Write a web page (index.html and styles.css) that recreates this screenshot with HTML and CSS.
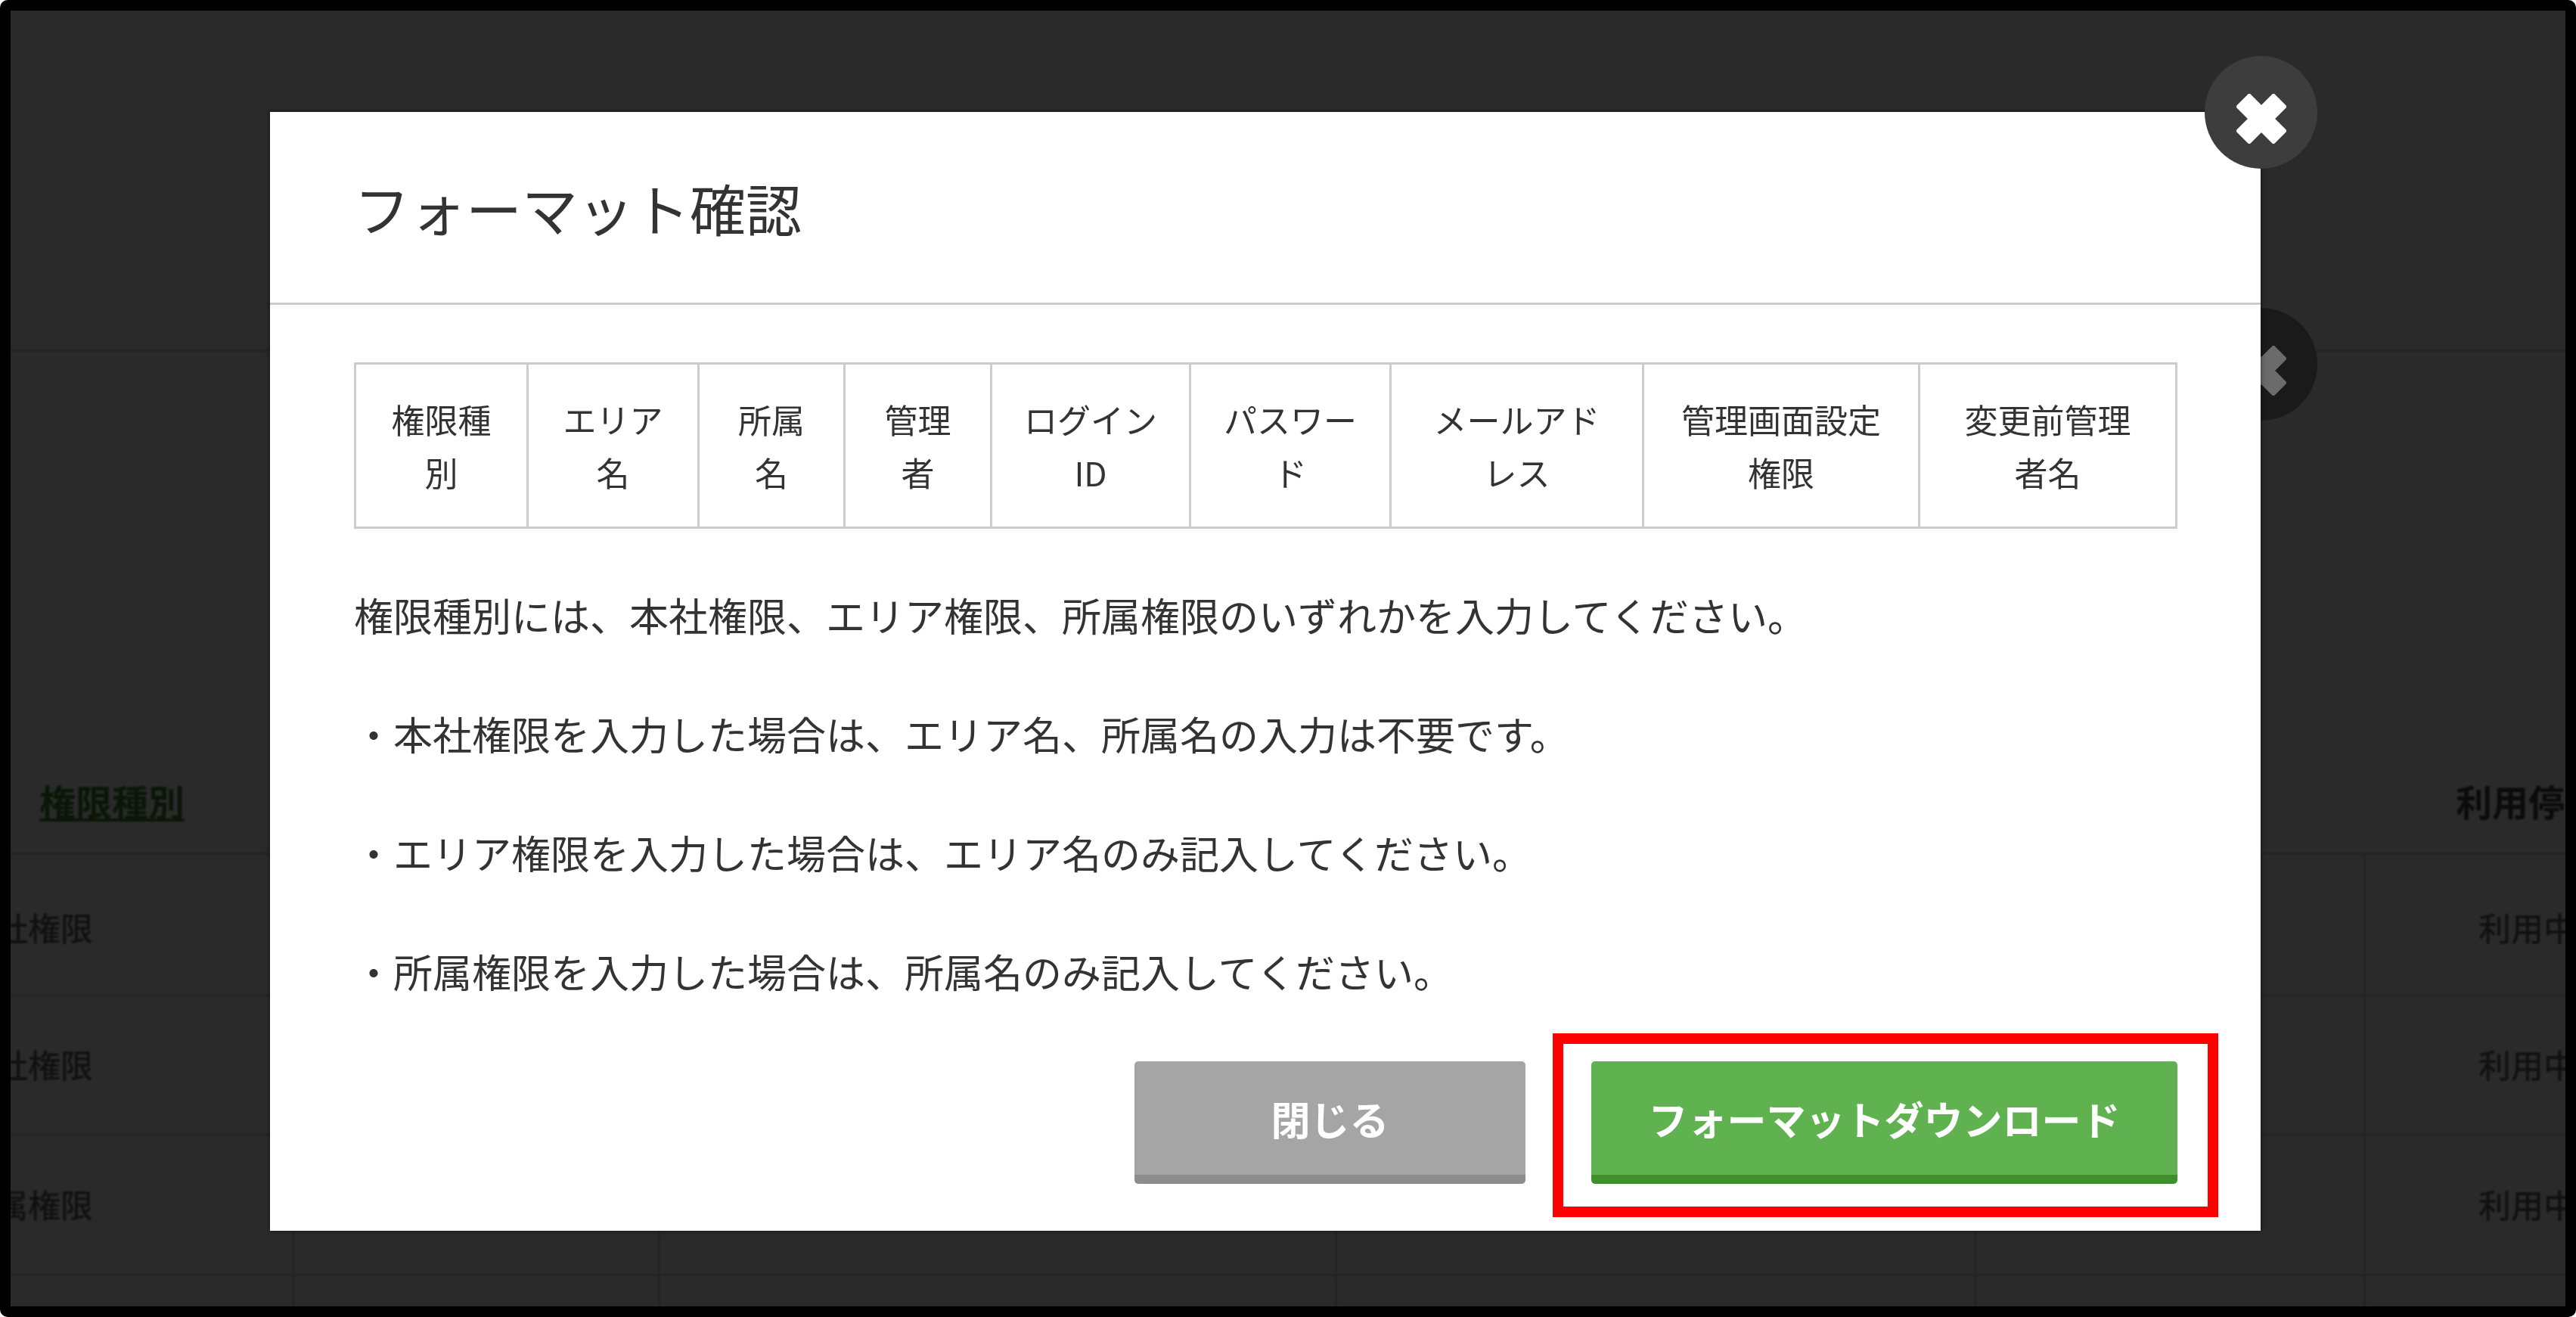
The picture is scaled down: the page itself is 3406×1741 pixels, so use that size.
FILE: index.html
```html
<!DOCTYPE html>
<html lang="ja">
<head>
    <meta charset="UTF-8">
    <title>フォーマット確認</title>
    <link rel="stylesheet" href="styles.css">
</head>
<body>
    <div class="frame">
        <!-- page behind the overlay -->
        <div class="page">
            <div class="page-head"></div>
            <div class="list">
                <div class="list-row list-header">
                    <div class="cell cell-type"><a href="#">権限種別</a></div>
                    <div class="cell"></div>
                    <div class="cell"></div>
                    <div class="cell"></div>
                    <div class="cell"></div>
                    <div class="cell cell-status">利用停止</div>
                </div>
                <div class="list-row list-row-first">
                    <div class="cell cell-type">本社権限</div>
                    <div class="cell"></div>
                    <div class="cell"></div>
                    <div class="cell"></div>
                    <div class="cell"></div>
                    <div class="cell cell-status">利用中</div>
                </div>
                <div class="list-row">
                    <div class="cell cell-type">本社権限</div>
                    <div class="cell"></div>
                    <div class="cell"></div>
                    <div class="cell"></div>
                    <div class="cell"></div>
                    <div class="cell cell-status">利用中</div>
                </div>
                <div class="list-row">
                    <div class="cell cell-type">所属権限</div>
                    <div class="cell"></div>
                    <div class="cell"></div>
                    <div class="cell"></div>
                    <div class="cell"></div>
                    <div class="cell cell-status">利用中</div>
                </div>
                <div class="list-row">
                    <div class="cell cell-type"></div>
                    <div class="cell"></div>
                    <div class="cell"></div>
                    <div class="cell"></div>
                    <div class="cell"></div>
                    <div class="cell cell-status"></div>
                </div>
            </div>
        </div>

        <div class="overlay"></div>

        <!-- close button of the dialog underneath -->
        <div class="close-btn close-under">
            <svg class="close-icon" viewBox="0 0 66 66"><path d="M17 3 L33 19 L49 3 L63 17 L47 33 L63 49 L49 63 L33 47 L17 63 L3 49 L19 33 L3 17 Z"/></svg>
        </div>

        <div class="modal">
            <div class="close-btn close-top">
                <svg class="close-icon" viewBox="0 0 66 66"><path d="M17 3 L33 19 L49 3 L63 17 L47 33 L63 49 L49 63 L33 47 L17 63 L3 49 L19 33 L3 17 Z"/></svg>
            </div>
            <div class="modal-head">
                <h2 class="modal-title">フォーマット確認</h2>
            </div>
            <div class="modal-body">
                <table class="format-table">
                    <colgroup>
                        <col class="c1"><col class="c2"><col class="c3"><col class="c4"><col class="c5"><col class="c6"><col class="c7"><col class="c8"><col class="c9">
                    </colgroup>
                    <tr>
                        <td>権限種<br>別</td>
                        <td>エリア<br>名</td>
                        <td>所属<br>名</td>
                        <td>管理<br>者</td>
                        <td>ログイン<br>ID</td>
                        <td>パスワー<br>ド</td>
                        <td>メールアド<br>レス</td>
                        <td>管理画面設定<br>権限</td>
                        <td>変更前管理<br>者名</td>
                    </tr>
                </table>
                <p class="note note-first">権限種別には、本社権限、エリア権限、所属権限のいずれかを入力してください。</p>
                <p class="note">・本社権限を入力した場合は、エリア名、所属名の入力は不要です。</p>
                <p class="note">・エリア権限を入力した場合は、エリア名のみ記入してください。</p>
                <p class="note">・所属権限を入力した場合は、所属名のみ記入してください。</p>
            </div>
            <div class="modal-foot">
                <a class="btn btn-gray" href="#">閉じる</a>
                <div class="btn-wrap">
                    <a class="btn btn-green" href="#">フォーマットダウンロード</a>
                    <div class="highlight"></div>
                </div>
            </div>
        </div>
    </div>
</body>
</html>
```

FILE: styles.css
```css
html, body {
    margin: 0;
    padding: 0;
    background-color: #fff;
}
body {
    font-family: "Noto Sans CJK JP", "Liberation Sans", sans-serif;
    color: #333;
}
.frame {
    position: relative;
    box-sizing: border-box;
    width: 3406px;
    height: 1741px;
    border: 14px solid #000;
    border-radius: 10px;
    overflow: hidden;
    background-color: #fff;
}

/* page behind */
.page {
    height: 100%;
    color: #666;
    font-size: 43px;
    font-weight: 500;
    filter: blur(1px);
}
.page-head {
    height: 451px;
    border-bottom: 3px solid #d4d4d4;
    box-sizing: border-box;
}
.list {
    display: grid;
    grid-template-rows: 665px 187px 184px 186px 60px;
}
.list-row {
    display: grid;
    grid-template-columns: 375px 484px 895px 845px 515px 264px;
    border-bottom: 3px solid #d4d4d4;
    box-sizing: border-box;
}
.cell {
    display: flex;
    align-items: center;
    box-sizing: border-box;
    padding-bottom: 4px;
    border-right: 3px solid #d4d4d4;
    white-space: nowrap;
}
.list-row-first .cell {
    padding-top: 6px;
    padding-bottom: 0;
}
.list-header .cell {
    border-right: none;
    align-items: flex-end;
    padding-bottom: 34px;
    font-size: 48px;
    font-weight: 700;
}
.cell-type a {
    margin-left: 38px;
    color: #3c8a2e;
}
.list-row .cell-type {
    text-indent: -63px;
}
.list-header .cell-type {
    text-indent: 0;
}
.cell-status {
    border-right: none;
    padding-left: 149px;
}
.list-header .cell-status {
    color: #444;
    padding-left: 119px;
}
.overlay {
    position: absolute;
    inset: 0;
    background-color: rgba(0,0,0,.835);
}

/* dialog */
.modal {
    position: absolute;
    left: 343px;
    top: 134px;
    box-sizing: border-box;
    width: 2632px;
    height: 1479px;
    background-color: #fff;
    box-shadow: 0 0 6px rgba(0,0,0,.6);
}
.close-btn {
    position: absolute;
    display: flex;
    align-items: center;
    justify-content: center;
    width: 149px;
    height: 149px;
    padding-top: 17px;
    box-sizing: border-box;
    border-radius: 50%;
}
.close-top {
    top: -74px;
    right: -75px;
    background-color: #3d3d3d;
}
.close-under {
    left: 2901px;
    top: 393px;
    background-color: #1a1a1a;
}
.close-icon {
    width: 66px;
    height: 66px;
    fill: #fff;
    stroke: #fff;
    stroke-width: 6px;
    stroke-linejoin: round;
}
.close-under .close-icon {
    fill: #6b6b6b;
    stroke: #6b6b6b;
}
.modal-head {
    display: flex;
    align-items: center;
    box-sizing: border-box;
    height: 255px;
    padding: 0 111px;
    border-bottom: 3px solid #ccc;
}
.modal-title {
    margin: 0;
    font-size: 74px;
    font-weight: 400;
    line-height: 1;
    color: #333;
    filter: blur(.7px);
}
.modal-body {
    padding: 76px 111px 0 111px;
}
.format-table {
    width: 2408px;
    height: 220px;
    border-collapse: collapse;
    table-layout: fixed;
}
.format-table td {
    padding: 0;
    border: 3px solid #ccc;
    font-size: 44px;
    line-height: 70px;
    text-align: center;
}
.format-table tr {
    filter: blur(.7px);
}
.c1 { width: 228px; }
.c2 { width: 226px; }
.c3 { width: 193px; }
.c4 { width: 194px; }
.c5 { width: 263px; }
.c6 { width: 265px; }
.c7 { width: 334px; }
.c8 { width: 365px; }
.c9 { width: 340px; }
.note {
    margin: 0;
    font-size: 52px;
    line-height: 157px;
    white-space: nowrap;
    filter: blur(.7px);
}
.note-first {
    margin-top: 35px;
}
.modal-foot {
    display: flex;
    justify-content: flex-end;
    gap: 87px;
    padding: 41px 110px 0 0;
}
.btn-wrap {
    position: relative;
}
.btn {
    display: flex;
    align-items: center;
    justify-content: center;
    box-sizing: border-box;
    height: 162px;
    border-radius: 5px;
    color: #fff;
    font-size: 52px;
    font-weight: 700;
    text-decoration: none;
    filter: blur(.7px);
}
.btn-gray {
    width: 517px;
    background-color: #a5a5a5;
    border-bottom: 12px solid #8c8c8c;
}
.btn-green {
    width: 775px;
    background-color: #5fb24f;
    border-bottom: 12px solid #3f8f2f;
}
.highlight {
    position: absolute;
    top: -37px;
    right: -54px;
    bottom: -44px;
    left: -51px;
    border: 14px solid #f00;
}
```
